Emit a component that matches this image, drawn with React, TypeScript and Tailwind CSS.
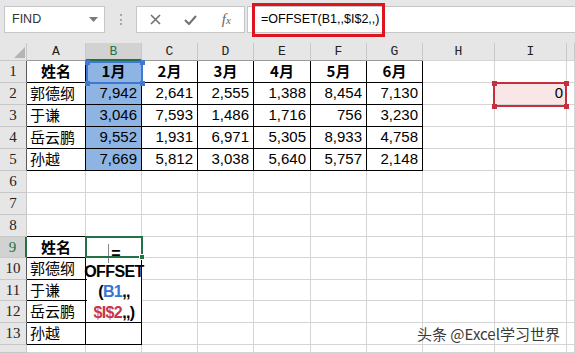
import React from "react";

const inT = (r: number, c: number) =>
  (r >= 1 && r <= 5 && c >= 1 && c <= 7) || (r >= 9 && r <= 13 && c >= 1 && c <= 2);

const LETTERS = ["", "A", "B", "C", "D", "E", "F", "G", "H", "I", ""];

const DATA: string[][] = [
  ["姓名", "1月", "2月", "3月", "4月", "5月", "6月"],
  ["郭德纲", "7,942", "2,641", "2,555", "1,388", "8,454", "7,130"],
  ["于谦", "3,046", "7,593", "1,486", "1,716", "756", "3,230"],
  ["岳云鹏", "9,552", "1,931", "6,971", "5,305", "8,933", "4,758"],
  ["孙越", "7,669", "5,812", "3,038", "5,640", "5,757", "2,148"],
];

const NAMES2 = ["姓名", "郭德纲", "于谦", "岳云鹏", "孙越"];

const NUM = "font-['Liberation_Sans',Arial,sans-serif] text-[15px] text-black";
const CJK = "font-['Noto_Sans_CJK_SC','Noto_Sans',sans-serif] text-[15px] text-black";

function Handles({ color }: { color: string }) {
  const base = `absolute w-[5px] h-[5px] ${color}`;
  return (
    <>
      <span className={`${base} -left-[3.5px] -top-[3.5px]`} />
      <span className={`${base} -right-[3.5px] -top-[3.5px]`} />
      <span className={`${base} -left-[3.5px] -bottom-[3.5px]`} />
      <span className={`${base} -right-[3.5px] -bottom-[3.5px]`} />
    </>
  );
}

function Cell({ r, c }: { r: number; c: number }) {
  if (r === 0) {
    if (c === 0) {
      return (
        <div className="relative bg-[#e6e6e6] border-r border-b border-r-[#c8c8c8] border-b-[#c8c8c8]">
          <svg className="absolute left-[14px] top-[4px]" width="11" height="11" viewBox="0 0 11 11">
            <polygon points="11,0 11,11 0,11" fill="#b5b5b5" />
          </svg>
        </div>
      );
    }
    const active = c === 2;
    const bottom = active
      ? "border-b-2 border-b-[#217346]"
      : inT(1, c)
      ? "border-b border-b-[#9a9a9a]"
      : "border-b border-b-[#d4d4d4]";
    return (
      <div
        className={`flex items-center justify-center border-r border-r-[#c8c8c8] ${bottom} ${
          active ? "bg-[#d2d2d2] text-[#217346]" : "bg-[#e6e6e6] text-[#222]"
        } font-['Liberation_Mono',monospace] text-[13px] leading-none`}
      >
        {LETTERS[c]}
      </div>
    );
  }

  if (c === 0) {
    const active = r === 9;
    const right = active
      ? "border-r-2 border-r-[#217346]"
      : inT(r, 1)
      ? "border-r border-r-[#5a5a5a]"
      : "border-r border-r-[#c8c8c8]";
    return (
      <div
        className={`flex items-center justify-center overflow-hidden border-b border-b-[#c8c8c8] ${right} ${
          active ? "bg-[#d2d2d2] text-[#217346]" : "bg-[#e6e6e6] text-[#222]"
        } font-['Liberation_Serif',serif] text-[15px] leading-none`}
      >
        {r <= 13 ? r : ""}
      </div>
    );
  }

  const rb = inT(r, c) || inT(r, c + 1) ? "border-r-black" : "border-r-[#d4d4d4]";
  const bb = inT(r, c) || inT(r + 1, c) ? "border-b-black" : "border-b-[#d4d4d4]";
  let bg = "bg-white";
  if (c === 2 && r >= 1 && r <= 5) bg = "bg-[#8eb4e3]";
  if (r === 2 && c === 9) bg = "bg-[#f9e6e6]";

  let content: React.ReactNode = null;
  let align = "justify-start";
  if (r >= 1 && r <= 5 && c <= 7) {
    const t = DATA[r - 1][c - 1];
    if (r === 1) {
      align = "justify-center";
      content = <span className={`${CJK} font-bold`}>{t}</span>;
    } else if (c === 1) {
      align = "justify-start pl-[3px]";
      content = <span className={CJK}>{t}</span>;
    } else {
      align = "justify-end pr-[4px]";
      content = <span className={NUM}>{t}</span>;
    }
  } else if (r >= 9 && r <= 13 && c === 1) {
    const t = NAMES2[r - 9];
    if (r === 9) {
      align = "justify-center";
      content = <span className={`${CJK} font-bold`}>{t}</span>;
    } else {
      align = "justify-start pl-[3px]";
      content = <span className={CJK}>{t}</span>;
    }
  } else if (r === 2 && c === 9) {
    align = "justify-end pr-[3px]";
    content = <span className={NUM}>0</span>;
  }

  return (
    <div className={`flex items-center overflow-hidden whitespace-nowrap border-r border-b ${rb} ${bb} ${bg} ${align}`}>
      {content}
    </div>
  );
}

function Toolbar() {
  return (
    <div className="h-[43px] bg-[#e6e6e6] flex items-start pt-[6px] pl-[4px]">
      <div className="w-[101px] h-[27px] bg-white border border-[#c6c6c6] flex items-center justify-between pl-[7px] pr-[6px]">
        <span className="font-['Liberation_Sans',Arial,sans-serif] text-[12.5px] text-[#333]">FIND</span>
        <svg width="9" height="5" viewBox="0 0 9 5">
          <polygon points="0,0 9,0 4.5,5" fill="#7a7a7a" />
        </svg>
      </div>
      <div className="w-[31px] h-[27px] flex flex-col items-center justify-center gap-[2.5px]">
        <span className="w-[2px] h-[2px] bg-[#a8a8a8]" />
        <span className="w-[2px] h-[2px] bg-[#a8a8a8]" />
        <span className="w-[2px] h-[2px] bg-[#a8a8a8]" />
      </div>
      <div className="w-[109px] h-[27px] bg-white border border-[#c6c6c6] flex items-center pl-[1px]">
        <div className="w-[36px] flex justify-center">
          <svg width="11" height="11" viewBox="0 0 11 11">
            <path d="M1 1 L10 10 M10 1 L1 10" stroke="#707070" strokeWidth="1.6" />
          </svg>
        </div>
        <div className="w-[36px] flex justify-center">
          <svg width="13" height="10" viewBox="0 0 13 10">
            <path d="M1 5 L5 9 L12 1" stroke="#707070" strokeWidth="2" fill="none" />
          </svg>
        </div>
        <div className="w-[36px] flex justify-center">
          <span className="font-['Liberation_Serif',serif] italic text-[15px] text-[#666] leading-none">
            f<span className="text-[11px]">x</span>
          </span>
        </div>
      </div>
      <div className="ml-[2px] flex-1 h-[27px] bg-white border border-[#c6c6c6] border-r-0 relative flex items-center pl-[13px]">
        <span className="font-['Liberation_Sans',Arial,sans-serif] text-[12.5px] text-black">=OFFSET(B1,,$I$2,,)</span>
        <div className="absolute left-[4px] -top-[4px] w-[133px] h-[34px] border-[3px] border-[#e0141e]" />
      </div>
    </div>
  );
}

export default function App() {
  const cells: React.ReactNode[] = [];
  for (let r = 0; r <= 14; r++) {
    for (let c = 0; c <= 10; c++) {
      cells.push(<Cell key={`${r}-${c}`} r={r} c={c} />);
    }
  }
  return (
    <div className="w-[575px] h-[353px] overflow-hidden bg-white">
      <Toolbar />
      <div className="relative grid h-[310px] grid-cols-[27px_59px_56px_56px_56px_57px_56px_56px_72px_72px_1fr] grid-rows-[18px_22px_22px_22px_22px_22px_22px_22px_22px_21px_22px_21px_22px_22px_1fr]">
        {cells}

        <div className="absolute left-[86px] top-[18px] w-[57px] h-[23px] border-2 border-[#3f78d2]">
          <Handles color="bg-[#3f78d2]" />
        </div>

        <div className="absolute left-[493px] top-[39px] w-[74px] h-[25px] border-2 border-[#c6303e]">
          <Handles color="bg-[#c6303e]" />
        </div>

        <div className="absolute left-[87px] top-[195px] w-[54px] h-[84px] bg-white pt-[3px] flex flex-col items-center font-['Liberation_Sans',Arial,sans-serif] text-[16px] font-bold tracking-[-0.6px] leading-[20.5px] text-black whitespace-nowrap">
          <div className="flex items-center translate-y-[2px]">
            <span className="inline-block w-px h-[19px] bg-[#888] mr-[2px]" />
            <span className="translate-y-[1px]">=</span>
          </div>
          <div>OFFSET</div>
          <div>
            (<span className="text-[#3b73d6]">B1</span>,,
          </div>
          <div>
            <span className="text-[#c8364a]">$I$2</span>,,)
          </div>
        </div>

        <div className="absolute left-[85px] top-[193px] w-[58px] h-[22px] border-2 border-[#217346]">
          <span className="absolute -right-[4px] -bottom-[4px] w-[6px] h-[6px] bg-[#217346] border border-white" />
        </div>

        <div className="absolute left-[417px] top-[281px] font-['Noto_Sans_CJK_SC','Noto_Sans',sans-serif] text-[15px] text-[#3a3a3a] whitespace-nowrap leading-[20px]">
          头条 @Excel学习世界
        </div>
      </div>
    </div>
  );
}
